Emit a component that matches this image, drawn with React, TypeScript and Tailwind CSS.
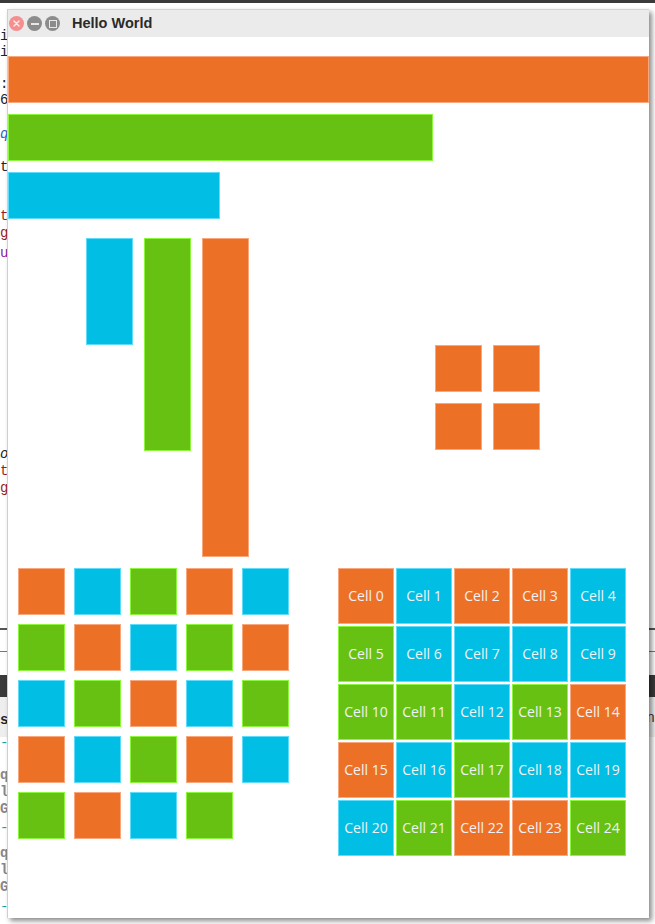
const ORANGE = 'bg-[#ec7126] border border-[#f9a77c]';
const GREEN = 'bg-[#67c112] border border-[#8cf53e]';
const BLUE = 'bg-[#00bee4] border border-[#5fdcfa]';

const cycle = [ORANGE, BLUE, GREEN];

const cellColors = [
    ORANGE, BLUE, ORANGE, ORANGE, BLUE,
    GREEN, BLUE, BLUE, BLUE, BLUE,
    GREEN, GREEN, BLUE, GREEN, ORANGE,
    ORANGE, BLUE, GREEN, BLUE, BLUE,
    BLUE, GREEN, ORANGE, ORANGE, GREEN,
];

function TitleBar() {
    return (
        <div className="h-[28px] bg-[#ebebeb] flex items-center border-t border-[#d4d4d4]">
            <div className="flex items-center gap-[3px] ml-px">
                <div className="w-[15px] h-[15px] shrink-0 rounded-full bg-[#f58e8e] flex items-center justify-center">
                    <svg width="9" height="9" viewBox="0 0 9 9">
                        <path d="M2 2l5 5M7 2l-5 5" stroke="#fde3e3" strokeWidth="1.6" strokeLinecap="round" />
                    </svg>
                </div>
                <div className="w-[15px] h-[15px] shrink-0 rounded-full bg-[#8c8c8c] flex items-center justify-center">
                    <div className="w-[8px] h-[2px] bg-[#e8e8e8]" />
                </div>
                <div className="w-[15px] h-[15px] shrink-0 rounded-full bg-[#8c8c8c] flex items-center justify-center">
                    <div className="w-[8px] h-[8px] border-[1.5px] border-[#e8e8e8]" />
                </div>
            </div>
            <span className="ml-[12px] text-[14.5px] font-bold text-[#2a2a2a] font-['Liberation_Sans',sans-serif]">Hello World</span>
        </div>
    );
}

function Backdrop() {
    return (
        <div className="absolute inset-0 overflow-hidden font-['Liberation_Mono',monospace] text-[14px]">
            <div className="h-[3px] bg-[#3a3a3a]" />
            <div className="absolute left-0 top-[28px] leading-[16px] text-[#222]">i<br />i</div>
            <div className="absolute left-0 top-[76px] leading-[16px] text-[#222]">:<br />6</div>
            <div className="absolute left-0 top-[124px] text-[#2563c8] italic">q</div>
            <div className="absolute left-0 top-[157px] text-[#222]">t</div>
            <div className="absolute left-0 top-[208px] leading-[17px] text-[#9b1c1c]">t<br />g</div>
            <div className="absolute left-0 top-[243px] text-[#8a1c9b]">u</div>
            <div className="absolute left-0 top-[446px] leading-[17px] text-[#222] italic">o</div>
            <div className="absolute left-0 top-[463px] leading-[17px] text-[#9b1c1c]">t<br />g</div>
            <div className="absolute left-0 right-0 top-[628px] h-[2px] bg-[#555]" />
            <div className="absolute left-0 right-0 top-[651px] h-px bg-[#777]" />
            <div className="absolute left-0 right-0 top-[675px] h-[22px] bg-[#3a3a3a]" />
            <div className="absolute left-0 right-0 top-[697px] h-[40px] bg-[#eeeeee]" />
            <div className="absolute left-0 top-[710px] text-[#222] font-bold">s</div>
            <div className="absolute right-0 top-[708px] text-[#333]">n</div>
            <div className="absolute left-0 top-[733px] text-[#0aa]">-</div>
            <div className="absolute left-0 top-[767px] leading-[17px] text-[#888] font-bold">q<br />l<br />G</div>
            <div className="absolute left-0 top-[818px] text-[#0aa]">-</div>
            <div className="absolute left-0 top-[845px] leading-[17px] text-[#888] font-bold">q<br />l<br />G</div>
            <div className="absolute left-0 top-[897px] text-[#0aa]">-</div>
        </div>
    );
}

export default function App() {
    return (
        <div className="relative w-[655px] h-[924px] bg-white overflow-hidden">
            <Backdrop />

            {/* Window */}
            <div className="absolute left-[7px] top-[9px] w-[642px] h-[909px] bg-white border-l border-[#cfcfcf] shadow-[3px_3px_5px_rgba(0,0,0,0.45)] flex flex-col">
                <TitleBar />

                <div className="flex-1 flex flex-col">
                    {/* horizontal bars */}
                    <div className="flex flex-col gap-[11px] mt-[19px]">
                        <div className={`h-[47px] w-[641px] ${ORANGE}`} />
                        <div className={`h-[47px] w-[425px] ${GREEN}`} />
                        <div className={`h-[47px] w-[212px] ${BLUE}`} />
                    </div>

                    {/* vertical bars + 2x2 */}
                    <div className="flex items-start mt-[19px]">
                        <div className="flex items-start gap-[11px] ml-[78px]">
                            <div className={`w-[47px] h-[107px] ${BLUE}`} />
                            <div className={`w-[47px] h-[213px] ${GREEN}`} />
                            <div className={`w-[47px] h-[319px] ${ORANGE}`} />
                        </div>
                        <div className="grid grid-cols-2 gap-[11px] ml-[186px] mt-[107px]">
                            {[0, 1, 2, 3].map((i) => (
                                <div key={i} className={`w-[47px] h-[47px] ${ORANGE}`} />
                            ))}
                        </div>
                    </div>

                    {/* bottom grids */}
                    <div className="flex items-start mt-[11px]">
                        <div className="grid grid-cols-[repeat(5,47px)] gap-[9px] ml-[10px]">
                            {Array.from({ length: 24 }).map((_, i) => (
                                <div key={i} className={`w-[47px] h-[47px] ${cycle[i % 3]}`} />
                            ))}
                        </div>
                        <div className="grid grid-cols-[repeat(5,56px)] gap-[2px] ml-[49px] font-['Open_Sans',sans-serif]">
                            {cellColors.map((c, i) => (
                                <div key={i} className={`w-[56px] h-[56px] flex items-center justify-center pb-px text-[14px] text-[#f2f2f2] ${c}`}>
                                    Cell {i}
                                </div>
                            ))}
                        </div>
                    </div>
                </div>
            </div>
        </div>
    );
}
